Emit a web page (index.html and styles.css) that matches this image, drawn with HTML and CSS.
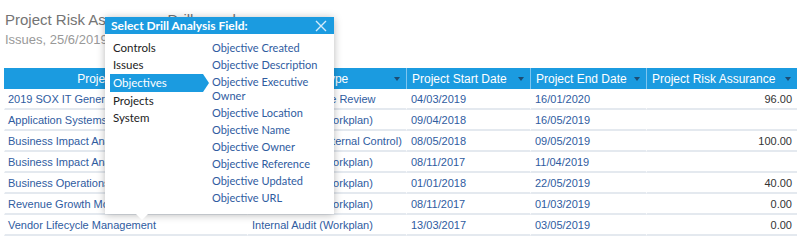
FILE: index.html
```html
<!doctype html>
<html lang="en">
<head>
  <meta charset="utf-8">
  <title>Project Risk Assurance, Drill anywhere</title>
  <link rel="stylesheet" href="styles.css">
</head>
<body>
  <div class="page">
    <h1 class="title">Project Risk Assurance, Drill anywhere</h1>
    <div class="subtitle">Issues, 25/6/2019</div>

    <table class="grid">
      <colgroup>
        <col style="width:243px">
        <col style="width:159px">
        <col style="width:124px">
        <col style="width:116px">
        <col>
      </colgroup>
      <thead>
        <tr>
          <th class="center">Project Name</th>
          <th class="center">Project Type</th>
          <th>Project Start Date</th>
          <th>Project End Date</th>
          <th>Project Risk Assurance</th>
        </tr>
      </thead>
      <tbody>
        <tr><td>2019 SOX IT General Controls</td><td>SOX Compliance Review</td><td>04/03/2019</td><td>16/01/2020</td><td class="num">96.00</td></tr>
        <tr><td>Application Systems Review</td><td>Internal Audit (Workplan)</td><td>09/04/2018</td><td>16/05/2019</td><td class="num"></td></tr>
        <tr><td>Business Impact Analysis 2018</td><td>Internal Audit (Internal Control)</td><td>08/05/2018</td><td>09/05/2019</td><td class="num">100.00</td></tr>
        <tr><td>Business Impact Analysis 2017</td><td>Internal Audit (Workplan)</td><td>08/11/2017</td><td>11/04/2019</td><td class="num"></td></tr>
        <tr><td>Business Operations Review</td><td>Internal Audit (Workplan)</td><td>01/01/2018</td><td>22/05/2019</td><td class="num">40.00</td></tr>
        <tr><td>Revenue Growth Model Review</td><td>Internal Audit (Workplan)</td><td>08/11/2017</td><td>01/03/2019</td><td class="num">0.00</td></tr>
        <tr><td>Vendor Lifecycle Management</td><td>Internal Audit (Workplan)</td><td>13/03/2017</td><td>03/05/2019</td><td class="num">0.00</td></tr>
      </tbody>
    </table>

    <div class="drill">
      <div class="drill-head">
        <span>Select Drill Analysis Field:</span>
        <svg class="close" width="12" height="12" viewBox="0 0 12 12"><path d="M1 1L11 11M11 1L1 11" stroke="#d4ebfa" stroke-width="1.4" fill="none"/></svg>
      </div>
      <div class="drill-body">
        <ul class="groups">
          <li>Controls</li>
          <li>Issues</li>
          <li class="active">Objectives</li>
          <li>Projects</li>
          <li>System</li>
        </ul>
        <ul class="fields">
          <li>Objective Created</li>
          <li>Objective Description</li>
          <li>Objective Executive Owner</li>
          <li>Objective Location</li>
          <li>Objective Name</li>
          <li>Objective Owner</li>
          <li>Objective Reference</li>
          <li>Objective Updated</li>
          <li>Objective URL</li>
        </ul>
      </div>
    </div>
  </div>
</body>
</html>
```

FILE: styles.css
```css
:root{
  --blue:#1b9be0;
  --link:#2f5c9f;
  --line:#e4e9ef;
}
*{box-sizing:border-box}
html,body{margin:0;background:#fff;font-family:"Liberation Sans",Arial,sans-serif}
.page{position:relative;padding:11px 4px 0 4px}

.title{margin:0 0 0 1px;font-size:15px;font-weight:400;color:#747474;line-height:18px}
.subtitle{margin:3px 0 0 1px;font-size:13px;color:#999;line-height:16px}

.grid{margin-top:20px;width:793px;border-collapse:separate;border-spacing:0;table-layout:fixed}
.grid th{background:var(--blue);color:#fff;font-size:12px;font-weight:400;text-align:left;height:21px;padding:0 24px 0 5px;position:relative;white-space:nowrap;overflow:hidden;border-left:1px solid #7ec5ef}
.grid th:first-child{border-left:none}
.grid th.center{text-align:center;padding-left:0}
.grid th:after{content:"";position:absolute;right:6px;top:9px;border-left:3px solid transparent;border-right:3px solid transparent;border-top:4px solid #1c4c74}
.grid td{font-size:11px;color:var(--link);height:21px;padding:0 5px 0 4px;border-bottom:2px solid var(--line);border-left:1px solid #fff;white-space:nowrap;overflow:hidden}
.grid td:first-child{padding-left:3px}
.grid td.num{text-align:right;color:#333}

/* drill popup */
.drill{position:absolute;left:105px;top:17px;width:229px;height:197px;background:#fff;box-shadow:0 1px 8px rgba(0,0,0,0.28);font-family:Lato,"Open Sans",sans-serif}
.drill:after{content:"";position:absolute;left:31px;bottom:-6px;border-left:6px solid transparent;border-right:6px solid transparent;border-top:6px solid #fff}
.drill-head{background:var(--blue);color:#fff;height:17px;display:flex;align-items:center;justify-content:space-between;padding:0 7px 0 6px;font-size:12px;font-weight:700}
.close{display:block}
.drill-body{display:flex;padding-top:7px}
.drill ul{list-style:none;margin:0;padding:0}
.groups{width:104px;padding-left:5px !important}
.groups li{font-size:11.5px;color:#222;line-height:14px;padding:0 3px;margin-bottom:3px;position:relative}
.groups li.active{background:var(--blue);color:#fff;line-height:18px;margin:-1px 6px 2px 0}
.groups li.active:after{content:"";position:absolute;right:-6px;top:0;border-top:9px solid transparent;border-bottom:9px solid transparent;border-left:6px solid var(--blue)}
.fields{flex:1;padding-left:3px !important;padding-right:6px !important}
.fields li{font-size:11px;color:var(--link);line-height:14px;margin-bottom:3px}
```
